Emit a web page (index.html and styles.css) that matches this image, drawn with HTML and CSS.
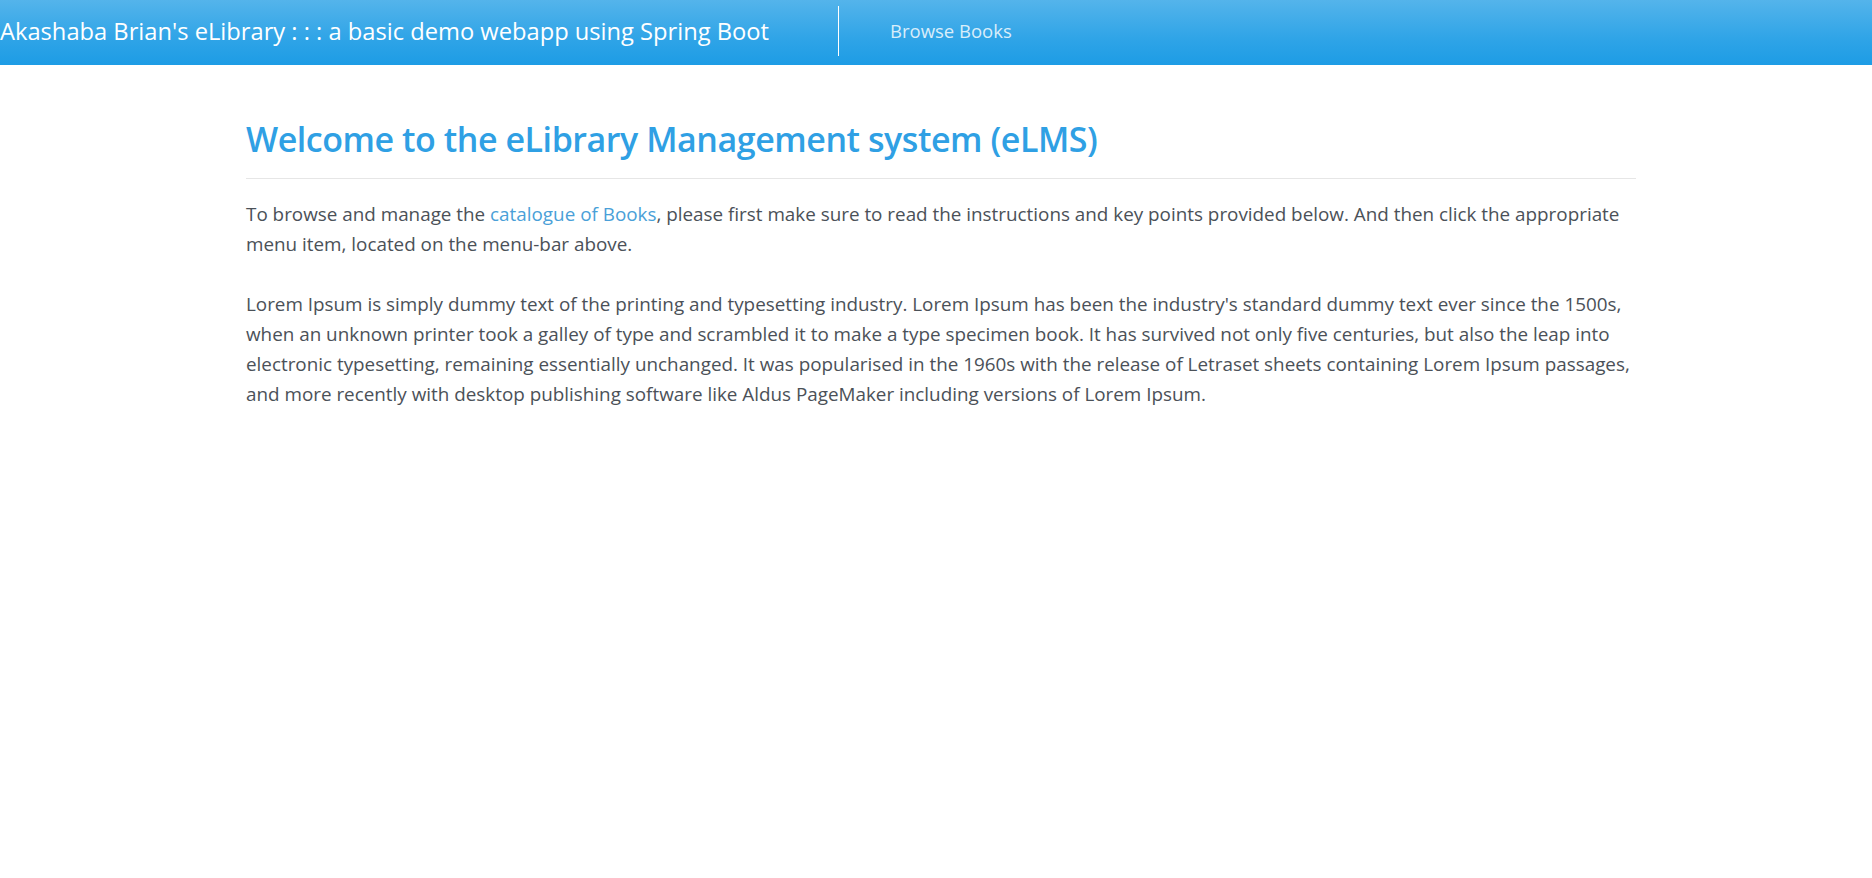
FILE: index.html
```html
<!DOCTYPE html>
<html lang="en">
<head>
<meta charset="utf-8">
<title>eLibrary</title>
<link rel="stylesheet" href="styles.css">
</head>
<body>
<nav class="navbar">
  <a class="brand" href="#">Akashaba Brian's eLibrary : : : a basic demo webapp using Spring Boot</a>
  <span class="divider"></span>
  <a class="nav-link" href="#">Browse Books</a>
</nav>
<main class="container">
  <h1 class="title">Welcome to the eLibrary Management system (eLMS)</h1>
  <hr class="rule">
  <p class="text">To browse and manage the <a class="link" href="#">catalogue of Books</a>, please first make sure to read the instructions and key points provided below. And then click the appropriate menu item, located on the menu-bar above.</p>
  <p class="text">Lorem Ipsum is simply dummy text of the printing and typesetting industry. Lorem Ipsum has been the industry's standard dummy text ever since the 1500s, when an unknown printer took a galley of type and scrambled it to make a type specimen book. It has survived not only five centuries, but also the leap into electronic typesetting, remaining essentially unchanged. It was popularised in the 1960s with the release of Letraset sheets containing Lorem Ipsum passages, and more recently with desktop publishing software like Aldus PageMaker including versions of Lorem Ipsum.</p>
</main>
</body>
</html>
```
FILE: styles.css
```css
html, body {
  margin: 0;
  padding: 0;
  background: #ffffff;
}
body {
  font-family: "Open Sans", "Noto Sans", sans-serif;
  color: #4b5158;
}
.navbar {
  display: flex;
  align-items: center;
  height: 65px;
  background: linear-gradient(#54b4eb, #2fa4e7 60%, #1d9ce5);
}
.brand {
  font-size: 23.7px;
  color: #ffffff;
  text-decoration: none;
  white-space: nowrap;
  line-height: 1;
  padding-bottom: 2px;
}
.divider {
  align-self: flex-start;
  margin: 6px 0 0 69px;
  width: 1px;
  height: 50px;
  background: #ffffff;
}
.nav-link {
  margin-left: 51px;
  font-size: 18.5px;
  color: rgba(255, 255, 255, 0.82);
  text-decoration: none;
  line-height: 1;
  padding-bottom: 2px;
}
.container {
  padding: 51px 236px 0 246px;
}
.title {
  margin: 0 0 16px;
  font-size: 34px;
  font-weight: 600;
  letter-spacing: -0.45px;
  line-height: 46px;
  color: #2fa0e4;
}
.rule {
  margin: 0 0 20px;
  border: 0;
  border-top: 1px solid #e6e6e6;
}
.text {
  margin: 0 0 30px;
  font-size: 18.85px;
  line-height: 30px;
}
.link {
  color: #4a9fd8;
  text-decoration: none;
}
```
